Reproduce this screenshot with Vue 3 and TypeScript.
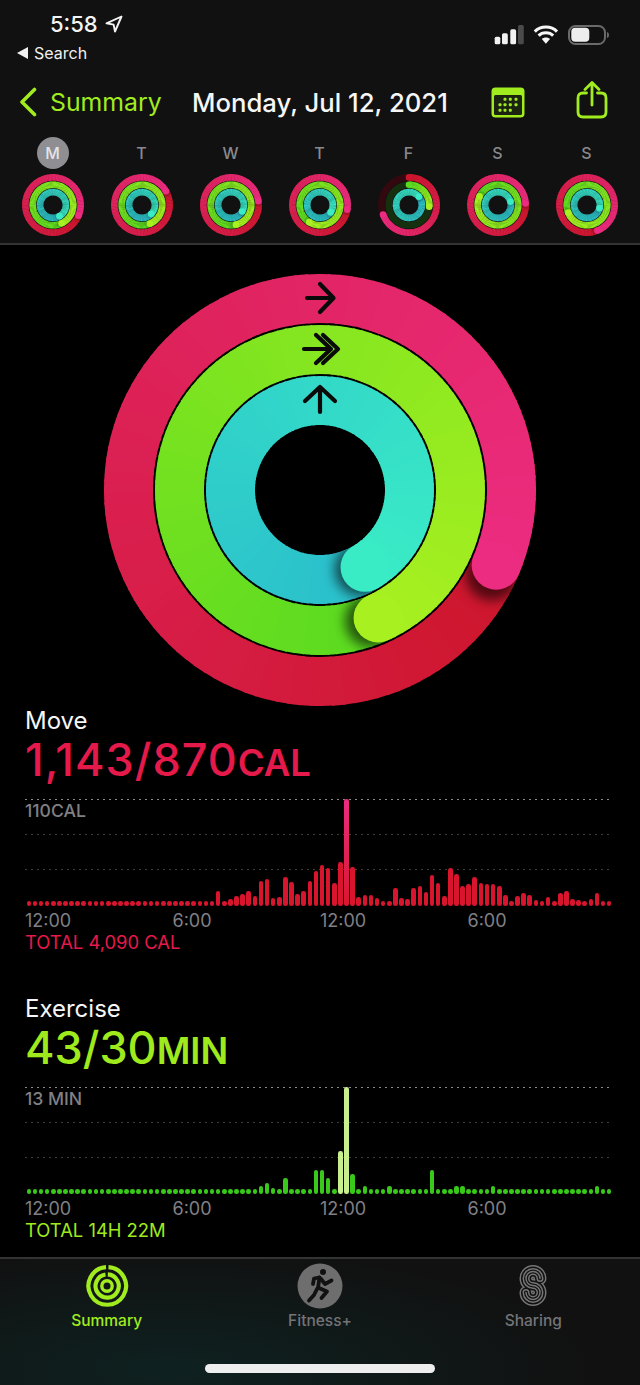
<script setup lang="ts">
import { h } from 'vue'

interface RingSpec {
  r: number
  end: number // degrees clockwise from 12 o'clock where the cap sits
  from: [number, number, number]
  to: [number, number, number]
  track?: string
}

const RED_FROM: [number, number, number] = [205, 22, 44]
const RED_TO: [number, number, number] = [236, 44, 128]
const GREEN_FROM: [number, number, number] = [90, 218, 32]
const GREEN_TO: [number, number, number] = [168, 240, 32]
const CYAN_FROM: [number, number, number] = [42, 190, 204]
const CYAN_TO: [number, number, number] = [58, 236, 198]

function point(r: number, deg: number) {
  const a = (deg * Math.PI) / 180
  return { x: r * Math.sin(a), y: -r * Math.cos(a) }
}

function arc(r: number, a0: number, a1: number) {
  const p = point(r, a0)
  const q = point(r, a1)
  const large = a1 - a0 > 180 ? 1 : 0
  return `M${p.x.toFixed(2)} ${p.y.toFixed(2)}A${r} ${r} 0 ${large} 1 ${q.x.toFixed(2)} ${q.y.toFixed(2)}`
}

function mix(spec: RingSpec, t: number) {
  const c = spec.from.map((v, i) => Math.round(v + (spec.to[i] - v) * t))
  return `rgb(${c[0]},${c[1]},${c[2]})`
}

function wedge(r: number, w: number, a0: number, a1: number) {
  const o = r + w / 2
  const i = r - w / 2
  const a = point(o, a0)
  const b = point(o, a1)
  const c = point(i, a1)
  const d = point(i, a0)
  return `M${a.x} ${a.y}A${o} ${o} 0 0 1 ${b.x} ${b.y}L${c.x} ${c.y}A${i} ${i} 0 0 0 ${d.x} ${d.y}Z`
}

function ringParts(spec: RingSpec, id: string, w: number, shade: number) {
  const parts = []
  const partial = spec.end < 360 && !!spec.track
  const start = partial ? 0 : spec.end - 360
  const sweep = spec.end - start
  if (spec.track) {
    parts.push(h('circle', { r: spec.r, fill: 'none', stroke: spec.track, 'stroke-width': w }))
  }
  const steps = Math.ceil(sweep / 3)
  for (let i = 0; i < steps; i++) {
    const a0 = start + (sweep * i) / steps
    const a1 = start + (sweep * (i + 1)) / steps + (i < steps - 1 ? 0.7 : 0)
    parts.push(h('path', {
      d: arc(spec.r, a0, a1),
      fill: 'none',
      stroke: mix(spec, i / steps),
      'stroke-width': w,
    }))
  }
  const cap = point(spec.r, spec.end)
  const ahead = point(spec.r, spec.end + 3)
  if (partial) {
    const s = point(spec.r, 0)
    parts.push(h('circle', { cx: s.x, cy: s.y, r: w / 2, fill: mix(spec, 0) }))
  } else {
    // soft shadow the cap throws on the start of its own ring
    const clip = `${id}-clip-${spec.r}`
    parts.push(h('clipPath', { id: clip }, [h('path', { d: wedge(spec.r, w, spec.end, spec.end + 40) })]))
    parts.push(h('g', { 'clip-path': `url(#${clip})` }, [
      h('circle', {
        cx: ahead.x,
        cy: ahead.y,
        r: w / 2 + 2,
        fill: '#000',
        opacity: shade,
        filter: `url(#${id}-blur)`,
      }),
    ]))
  }
  parts.push(h('circle', { cx: cap.x, cy: cap.y, r: w / 2, fill: mix(spec, 1) }))
  return parts
}

const Rings = (props: { ends: number[]; size: number; uid: string; dim?: boolean; hero?: boolean }) => {
  // the thumbnails need wider gaps or the black hairlines vanish at this scale
  const w = props.hero ? 49 : 46
  const shade = props.hero ? 0.6 : 0.25
  const specs: RingSpec[] = [
    { r: 191.5, end: props.ends[0], from: RED_FROM, to: RED_TO, track: props.dim ? '#33090f' : undefined },
    { r: 140.5, end: props.ends[1], from: GREEN_FROM, to: GREEN_TO, track: props.dim ? '#15300f' : undefined },
    { r: 89.5, end: props.ends[2], from: CYAN_FROM, to: CYAN_TO },
  ]
  const kids: any[] = [
    h('filter', { id: `${props.uid}-blur`, x: '-50%', y: '-50%', width: '200%', height: '200%' }, [
      h('feGaussianBlur', { stdDeviation: 6 }),
    ]),
  ]
  specs.forEach((s) => kids.push(...ringParts(s, props.uid, w, shade)))
  if (props.hero) {
    kids.push(h('g', {
      fill: 'none',
      stroke: '#0a0a0a',
      'stroke-width': 4.2,
      'stroke-linecap': 'round',
      'stroke-linejoin': 'round',
    }, [
      h('path', { d: 'M-13 -192H13M0 -206L13.5 -192L0 -178' }),
      h('path', { d: 'M-16 -141H11M-4 -155L11 -141L-4 -127M3 -155L18 -141L3 -127' }),
      h('path', { d: 'M0 -78V-103M-15 -89L0 -103L15 -89' }),
    ]))
  }
  return h('svg', {
    width: props.size,
    height: props.size,
    viewBox: props.hero ? '-216 -216 432 432' : '-215 -215 430 430',
    style: 'display:block',
  }, kids)
}

const days = [
  { label: 'M', ends: [113, 155, 150], selected: true, dim: false },
  { label: 'T', ends: [60, 157, 135], dim: false },
  { label: 'W', ends: [82, 166, 120], dim: false },
  { label: 'T', ends: [100, 212, 125], dim: false },
  { label: 'F', ends: [250, 95, 50], dim: true },
  { label: 'S', ends: [87, 295, 75], dim: false },
  { label: 'S', ends: [158, 248, 105], dim: false },
]

const moveBars = [
  4, 4, 4, 4, 4, 4, 4, 4, 4, 4, 4, 4, 4, 4, 4, 4, 4, 4, 4, 4, 4, 4, 4, 4, 4, 4, 4, 4, 4, 4, 4,
  14, 4, 6, 9, 11, 14, 9, 24, 26, 7, 8, 28, 23, 11, 14, 24, 34, 40, 37, 22, 43, 106, 38, 8, 10, 10, 7, 4, 4,
  17, 7, 6, 17, 19, 13, 30, 22, 9, 37, 31, 19, 21, 28, 22, 21, 21, 19, 10, 4,
  9, 12, 10, 5, 4, 8, 4, 12, 14, 6, 5, 4, 6, 12, 4, 4,
]

const exerciseBars = Array.from({ length: 96 }, () => 4)
const tall: Record<number, number> = {
  38: 7, 39: 10, 40: 5, 42: 15, 47: 23, 48: 23, 49: 15, 51: 42, 52: 106, 53: 19, 55: 7, 59: 7,
  66: 23, 70: 7, 71: 7, 76: 7, 93: 7,
}
Object.keys(tall).forEach((k) => { exerciseBars[Number(k)] = tall[Number(k)] })

const charts = [
  {
    title: 'Move',
    value: '1,143/870',
    unit: 'CAL',
    scale: '110CAL',
    total: 'TOTAL 4,090 CAL',
    cls: 'move',
    bars: moveBars,
    peaks: [52],
  },
  {
    title: 'Exercise',
    value: '43/30',
    unit: 'MIN',
    scale: '13 MIN',
    total: 'TOTAL 14H 22M',
    cls: 'exercise',
    bars: exerciseBars,
    peaks: [51, 52],
  },
]

const ticks = ['12:00', '6:00', '12:00', '6:00']
const calendarDots = [
  [13, 12.3], [18.3, 12.3], [24, 12.3],
  [8, 17.7], [13, 17.7], [18.3, 17.7], [24, 17.7],
  [8, 23.3], [13, 23.3], [18.3, 23.3],
]
</script>

<template>
  <div class="phone">
    <header class="top">
      <div class="status">
        <div class="status-left">
          <div class="clock">
            <span>5:58</span>
            <svg width="18" height="18" viewBox="0 0 18 18">
              <path d="M16.5 1.5L1.5 8.3L8.6 9.6L10 16.5Z" fill="none" stroke="#f4f4f4" stroke-width="1.9" stroke-linejoin="round" />
            </svg>
          </div>
          <div class="back-app">
            <svg width="11" height="12" viewBox="0 0 11 12"><path d="M11 0V12L0 6Z" fill="#f0f0f0" /></svg>
            <span>Search</span>
          </div>
        </div>
        <svg class="status-icons" width="118" height="22" viewBox="0 0 118 22">
          <rect x="2.7" y="12.7" width="5.6" height="7.6" rx="1.6" fill="#f2f2f2" />
          <rect x="10" y="9.3" width="5.8" height="11" rx="1.6" fill="#f2f2f2" />
          <rect x="18.3" y="5.3" width="5.8" height="15" rx="1.6" fill="#f2f2f2" />
          <rect x="26" y="1" width="5.8" height="19.3" rx="1.6" fill="#4a4a4a" />
          <g fill="none" stroke="#f6f6f6" stroke-width="3" stroke-linecap="butt">
            <path d="M42.8 7.6C48.5 1.6 59.3 1.6 65 7.6" />
            <path d="M46.6 11.6C50.3 7.7 57.5 7.7 61.2 11.6" />
          </g>
          <path d="M49.8 15L53.9 19.8L58 15C56 13 51.8 13 49.8 15Z" fill="#f6f6f6" />
          <rect x="77" y="2" width="36" height="18" rx="6.5" fill="none" stroke="#6a6a6a" stroke-width="2" />
          <rect x="79.3" y="3.8" width="18" height="14" rx="4" fill="#ededed" />
          <path d="M115 8C116.5 8.5 117 9.5 117 11C117 12.5 116.5 13.5 115 14Z" fill="#6a6a6a" />
        </svg>
      </div>

      <nav class="nav">
        <svg class="chevron" width="18" height="30" viewBox="0 0 18 30">
          <path d="M15.5 2.5L3 15L15.5 27.5" fill="none" stroke="#a1ec1e" stroke-width="3.6" stroke-linecap="round" stroke-linejoin="round" />
        </svg>
        <span class="nav-back">Summary</span>
        <span class="nav-title">Monday, Jul 12, 2021</span>
        <svg class="cal" width="34" height="31" viewBox="0 0 34 31">
          <rect x="0.5" y="0.5" width="33" height="30" rx="4" fill="#a1ec1e" />
          <rect x="3" y="8" width="28" height="20" rx="1.5" fill="#1a2410" />
          <rect v-for="(d, i) in calendarDots" :key="i" :x="d[0] - 0.5" :y="d[1] - 1.5" width="3" height="3" rx="1" fill="#a1ec1e" />
        </svg>
        <svg class="share" width="32" height="38" viewBox="0 0 32 38">
          <g fill="none" stroke="#a1ec1e" stroke-width="2.8" stroke-linecap="round" stroke-linejoin="round">
            <path d="M10.5 12H7Q2 12 2 17V31Q2 36 7 36H25Q30 36 30 31V17Q30 12 25 12H21.5" />
            <path d="M16 24V2M9 8.5L16 1.5L23 8.5" />
          </g>
        </svg>
      </nav>

      <div class="week">
        <div v-for="(day, i) in days" :key="i" class="day">
          <span class="day-label" :class="{ selected: day.selected }">{{ day.label }}</span>
          <Rings :ends="day.ends" :size="62" :uid="`day${i}`" :dim="day.dim" />
        </div>
      </div>
    </header>

    <main class="content">
      <div class="hero">
        <Rings :ends="[113.1, 155.6, 149.8]" :size="432" uid="hero" :hero="true" />
      </div>

      <section v-for="chart in charts" :key="chart.cls" class="metric" :class="chart.cls">
        <h2>{{ chart.title }}</h2>
        <div class="value">{{ chart.value }}<small>{{ chart.unit }}</small></div>
        <div class="chart">
          <div class="grid-line first"></div>
          <div class="grid-line second"></div>
          <div class="grid-line third"></div>
          <span class="scale">{{ chart.scale }}</span>
          <div class="bars">
            <i
              v-for="(bar, i) in chart.bars"
              :key="i"
              :class="{ peak: chart.peaks.includes(i) }"
              :style="{ height: bar + 1 + 'px' }"
            ></i>
          </div>
        </div>
        <div class="ticks"><span v-for="(t, i) in ticks" :key="i">{{ t }}</span></div>
        <div class="total">{{ chart.total }}</div>
      </section>
    </main>

    <footer class="tabs">
      <div class="tab-row">
        <div class="tab active">
          <svg width="46" height="46" viewBox="-23 -23 46 46">
            <g fill="none" stroke="#a1ec1e">
              <path d="M1.5 -18.8A18.8 18.8 0 1 1 -1 -18.8" stroke-width="4.2" />
              <path d="M0.8 -11.6A11.6 11.6 0 1 1 -1.5 -11.5" stroke-width="4.2" />
              <circle r="5.2" stroke-width="3.4" />
            </g>
          </svg>
          <span>Summary</span>
        </div>
        <div class="tab">
          <svg width="46" height="46" viewBox="0 0 46 46">
            <circle cx="23" cy="23" r="22.5" fill="#6e6e6e" />
            <circle cx="26" cy="9" r="3" fill="#111" />
            <g fill="none" stroke="#111" stroke-width="3.8" stroke-linecap="round" stroke-linejoin="round">
              <path d="M22.5 14.5L21 25" />
              <path d="M22 14.5L17 15.5L16 21" />
              <path d="M24 16L28 21L34.5 17.5" />
              <path d="M20 26L17 32L12 37.5" />
              <path d="M22 25L30 28.5L24.5 35" />
            </g>
          </svg>
          <span>Fitness+</span>
        </div>
        <div class="tab">
          <svg width="46" height="46" viewBox="-9.5 -2.5 46 46">
            <g fill="none" stroke-linecap="round">
              <path d="M20.5 13A7 7 0 1 0 13.5 20A7 7 0 1 1 6.5 27" stroke="#757575" stroke-width="13" />
              <path d="M20.5 13A7 7 0 1 0 13.5 20A7 7 0 1 1 6.5 27" stroke="#111" stroke-width="10" />
              <path d="M20.5 13A7 7 0 1 0 13.5 20A7 7 0 1 1 6.5 27" stroke="#757575" stroke-width="7" />
              <path d="M20.5 13A7 7 0 1 0 13.5 20A7 7 0 1 1 6.5 27" stroke="#111" stroke-width="4" />
              <path d="M20.5 13A7 7 0 1 0 13.5 20A7 7 0 1 1 6.5 27" stroke="#757575" stroke-width="1.5" />
            </g>
          </svg>
          <span>Sharing</span>
        </div>
      </div>
      <div class="home-bar"></div>
    </footer>
  </div>
</template>

<style>
html,
body {
  background: #000;
}
</style>

<style scoped>
.phone {
  width: 640px;
  height: 1385px;
  display: flex;
  flex-direction: column;
  background: #000;
  color: #fff;
  font-family: Inter, "Liberation Sans", sans-serif;
  overflow: hidden;
}

.top {
  flex: none;
  height: 245px;
  box-sizing: border-box;
  background: #111;
  border-bottom: 2px solid #333;
}

.status {
  height: 74px;
  display: flex;
  justify-content: space-between;
}

.status-left {
  padding-left: 17px;
}

.clock {
  display: flex;
  align-items: center;
  gap: 7px;
  margin: 11px 0 0 33px;
  height: 26px;
  font-size: 22px;
  font-weight: 500;
  color: #f4f4f4;
}

.back-app {
  display: flex;
  align-items: center;
  gap: 6px;
  margin-top: 6px;
  font-size: 16px;
  font-weight: 400;
  color: #f0f0f0;
}

.status-icons {
  margin: 24px 30px 0 0;
}

.nav {
  height: 56px;
  display: flex;
  align-items: center;
  padding-left: 19px;
}

.nav-back {
  margin-left: 13px;
  width: 142px;
  font-size: 24.8px;
  color: #a1ec1e;
}

.nav-title {
  width: 299px;
  font-size: 25.7px;
  font-weight: 500;
  color: #f6f6f6;
}

.share {
  margin-left: 51px;
  margin-top: -4px;
}

.week {
  display: grid;
  grid-template-columns: repeat(7, 89px);
  padding: 7px 0 0 8px;
}

.day {
  display: flex;
  flex-direction: column;
  align-items: center;
  gap: 5px;
}

.day-label {
  width: 32px;
  height: 32px;
  border-radius: 50%;
  display: flex;
  align-items: center;
  justify-content: center;
  font-size: 16px;
  font-weight: 500;
  color: #8a8a8e;
}

.day-label.selected {
  background: #8e8e93;
  color: #e4e4e6;
}

.content {
  flex: 1;
  min-height: 0;
}

.hero {
  display: flex;
  justify-content: center;
  padding-top: 28.5px;
  margin-bottom: 0.5px;
}

.metric {
  padding: 0 27px 0 25px;
  height: 246px;
  margin-bottom: 42px;
}

.metric:last-child {
  margin-bottom: 0;
}

.metric h2 {
  margin: 0;
  height: 30px;
  line-height: 30px;
  font-size: 24px;
  font-weight: 400;
  color: #f6f6f6;
}

.value {
  height: 48px;
  line-height: 48px;
  font-size: 45px;
  font-weight: 500;
  white-space: nowrap;
}

.move .value {
  letter-spacing: 1px;
}

.value small {
  font-size: 36.5px;
  font-weight: 600;
  letter-spacing: 0;
}

.chart {
  position: relative;
  height: 107px;
  margin-top: 15px;
}

.grid-line {
  position: absolute;
  left: 0;
  right: 0;
  height: 1px;
  background: repeating-linear-gradient(90deg, #3f3f3f 0 2px, transparent 2px 6px);
}

.grid-line.first {
  top: 0;
  background: repeating-linear-gradient(90deg, #8a8a8a 0 2px, transparent 2px 6px);
}

.grid-line.second {
  top: 35px;
}

.grid-line.third {
  top: 70px;
}

.scale {
  position: absolute;
  left: 0;
  top: 1px;
  font-size: 17.6px;
  font-weight: 500;
  color: #808084;
}

.bars {
  position: absolute;
  inset: 0;
  padding-left: 1.5px;
  display: flex;
  align-items: flex-end;
  gap: 1.525px;
}

.bars i {
  display: block;
  width: 4.6px;
  flex: none;
  border-radius: 2.3px;
}

.ticks {
  display: grid;
  grid-template-columns: repeat(4, 147.5px);
  height: 20px;
  margin-top: 5px;
  line-height: 20px;
  font-size: 18px;
  color: #808084;
}

.total {
  height: 20px;
  margin-top: 1px;
  line-height: 20px;
  font-size: 18.4px;
}

.move .value,
.move .total {
  color: #e6194b;
}

.move .bars i {
  background: #d9152e;
}

.move .bars i.peak {
  background: linear-gradient(#ec2c80, #d9152e);
}

.exercise .value,
.exercise .total {
  color: #9fea1c;
}

.exercise .bars i {
  background: #38c91b;
}

.exercise .bars i.peak {
  background: #c9ee8e;
}

.tabs {
  flex: none;
  height: 128px;
  box-sizing: border-box;
  border-top: 2px solid #333;
  background: radial-gradient(420px 120px at 170px 110px, #0e2120, #111 100%);
}

.tab-row {
  display: grid;
  grid-template-columns: repeat(3, 1fr);
  padding-top: 4px;
}

.tab {
  display: flex;
  flex-direction: column;
  align-items: center;
  gap: 2px;
  font-size: 15.5px;
  font-weight: 500;
  color: #747478;
}

.tab.active {
  color: #a1ec1e;
}

.home-bar {
  width: 230px;
  height: 9px;
  margin: 34px auto 0;
  border-radius: 5px;
  background: #eee;
}
</style>
